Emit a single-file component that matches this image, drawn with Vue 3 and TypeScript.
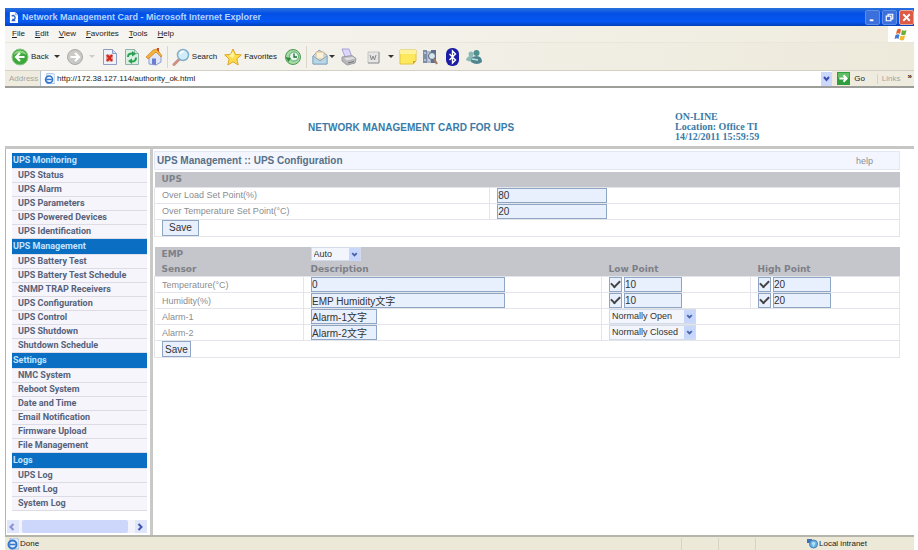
<script setup lang="ts">
import { ref } from 'vue'

interface NavGroup {
  title: string
  items: string[]
}

interface SetPoint {
  id: string
  label: string
  value: string
}

interface SensorRow {
  id: string
  label: string
  description: string
  low: string
  high: string
  lowOn: boolean
  highOn: boolean
}

interface AlarmRow {
  id: string
  label: string
  description: string
  mode: string
}

const menus: string[] = ['File', 'Edit', 'View', 'Favorites', 'Tools', 'Help']

const groups: NavGroup[] = [
  {
    title: 'UPS Monitoring',
    items: ['UPS Status', 'UPS Alarm', 'UPS Parameters', 'UPS Powered Devices', 'UPS Identification'],
  },
  {
    title: 'UPS Management',
    items: [
      'UPS Battery Test',
      'UPS Battery Test Schedule',
      'SNMP TRAP Receivers',
      'UPS Configuration',
      'UPS Control',
      'UPS Shutdown',
      'Shutdown Schedule',
    ],
  },
  {
    title: 'Settings',
    items: ['NMC System', 'Reboot System', 'Date and Time', 'Email Notification', 'Firmware Upload', 'File Management'],
  },
  { title: 'Logs', items: ['UPS Log', 'Event Log', 'System Log'] },
]

const address = ref('http://172.38.127.114/authority_ok.html')
const empMode = ref('Auto')

const setPoints = ref<SetPoint[]>([
  { id: 'load', label: 'Over Load Set Point(%)', value: '80' },
  { id: 'temp', label: 'Over Temperature Set Point(°C)', value: '20' },
])

const sensors = ref<SensorRow[]>([
  { id: 'temperature', label: 'Temperature(°C)', description: '0', low: '10', high: '20', lowOn: true, highOn: true },
  { id: 'humidity', label: 'Humidity(%)', description: 'EMP Humidity文字', low: '10', high: '20', lowOn: true, highOn: true },
])

const alarms = ref<AlarmRow[]>([
  { id: 'alarm1', label: 'Alarm-1', description: 'Alarm-1文字', mode: 'Normally Open' },
  { id: 'alarm2', label: 'Alarm-2', description: 'Alarm-2文字', mode: 'Normally Closed' },
])
</script>

<template>
  <div class="window">
    <header class="titlebar">
      <svg class="title-icon" viewBox="0 0 10 12" aria-hidden="true">
        <path d="M1 0h6l3 3v9H1z" fill="#fff" />
        <path d="M7 0v3h3" fill="none" stroke="#7fa3dc" />
        <path d="M3 4.500a2.200 2.200 0 1 1 3 3.500H3.500M3 9.500h4" fill="none" stroke="#2a62c8" stroke-width="1.400" />
      </svg>
      <h1>Network Management Card - Microsoft Internet Explorer</h1>
      <div class="window-controls">
        <button type="button" aria-label="Minimize">
          <svg viewBox="0 0 14 14"><path d="M4 10h4" stroke="#fff" stroke-width="2" /></svg>
        </button>
        <button type="button" aria-label="Restore">
          <svg viewBox="0 0 14 14"><path d="M5.500 5V3.500h5v5H9M3.500 5.500h5v5h-5z" fill="none" stroke="#fff" stroke-width="1.300" /></svg>
        </button>
        <button type="button" class="close" aria-label="Close">
          <svg viewBox="0 0 14 14"><path d="M3.500 3.500l7 7M10.500 3.500l-7 7" stroke="#fff" stroke-width="2" /></svg>
        </button>
      </div>
    </header>

    <nav class="menubar" aria-label="Menu">
      <button v-for="menu in menus" :key="menu" type="button"><u>{{ menu.charAt(0) }}</u>{{ menu.slice(1) }}</button>
      <span class="throbber">
        <svg viewBox="0 0 16 14" aria-hidden="true">
          <path d="M4 3q2-2 4-.500L7 7Q5 5.500 3 7z" fill="#e8622c" />
          <path d="M9 3q2 1.500 4.500 0L12.500 7.500Q10 9 8 7.500z" fill="#6fae3c" />
          <path d="M2.500 8q2-1.500 4-.200L5.500 12Q4 10.500 1.500 12z" fill="#3f7bd0" />
          <path d="M7.500 8.500q2 1.500 4.500 0L11 13q-2 1-4.500-.500z" fill="#f2b92a" />
        </svg>
      </span>
    </nav>

    <div class="toolbar">
      <button type="button">
        <svg class="icon" viewBox="0 0 18 18" aria-hidden="true">
          <circle cx="9" cy="9" r="8" fill="#3fa83c" stroke="#8fc98a" />
          <path d="M2.500 7A7 7 0 0 1 15.500 7Q9 3 2.500 7z" fill="#8fd483" />
          <path d="M13.500 9H6M9 5L5 9l4 4" fill="none" stroke="#fff" stroke-width="2.200" />
        </svg>
        Back
      </button>
      <button type="button" class="drop" aria-label="Back history"><i class="caret"></i></button>
      <button type="button" aria-label="Forward">
        <svg class="icon" viewBox="0 0 18 18">
          <circle cx="9" cy="9" r="7.500" fill="#c9c9c6" stroke="#aaa" />
          <path d="M4.500 9H12M9 5l4 4-4 4" fill="none" stroke="#fff" stroke-width="2.200" />
        </svg>
      </button>
      <button type="button" class="drop faint" aria-label="Forward history"><i class="caret"></i></button>
      <button type="button" aria-label="Stop">
        <svg class="icon" viewBox="0 0 18 18">
          <path d="M2.500 1.500h9l4 4v11h-13z" fill="#eef2fa" stroke="#8d9ec0" />
          <path d="M11.500 1.500v4h4" fill="#cbd7ee" stroke="#8d9ec0" />
          <path d="M5 6.500h7v7H5z" fill="#e5a09a" />
          <path d="M6 7l5 6M11 7l-5 6" stroke="#cf2a20" stroke-width="2" />
        </svg>
      </button>
      <button type="button" aria-label="Refresh">
        <svg class="icon" viewBox="0 0 18 18">
          <path d="M2.500 1.500h9l4 4v11h-13z" fill="#d9efe2" stroke="#8fb3a6" />
          <path d="M11.500 1.500v4h4" fill="#cbe4d8" stroke="#8fb3a6" />
          <path d="M5 9q0-4 5-3.500M13 9.500q0 4.500-5 4" fill="none" stroke="#27a050" stroke-width="2" />
          <path d="M9 3l4 3-4 2.500zM9 10.500v5.500L5 13z" fill="#27a050" />
        </svg>
      </button>
      <button type="button" aria-label="Home">
        <svg class="icon" viewBox="0 0 18 18">
          <path d="M4 8v8l7 1 5-3V8l-5-5z" fill="#dfe6f8" stroke="#8c9cd4" />
          <path d="M1 9l7-7 4-1 5 7-1 1-5-5-8 7z" fill="#f2b23c" stroke="#d08020" stroke-width=".700" />
          <path d="M12 2V0h2v4z" fill="#c84a30" />
          <path d="M7 10.500h4V17l-4-1z" fill="#6a80cc" />
        </svg>
      </button>
      <i class="rule"></i>
      <button type="button">
        <svg class="icon" viewBox="0 0 18 18" aria-hidden="true">
          <path d="M7.500 11L2 16.500" stroke="#c89284" stroke-width="3" stroke-linecap="round" />
          <circle cx="11" cy="7" r="5.500" fill="#cdeefa" stroke="#85aecb" stroke-width="1.500" />
          <path d="M8 6q1-3 4-2.500" fill="none" stroke="#fff" stroke-width="1.500" />
        </svg>
        Search
      </button>
      <button type="button" class="favorites">
        <svg class="icon" viewBox="0 0 18 18" aria-hidden="true">
          <path d="M9 1l2.400 5.300 5.900.600-4.400 4 1.300 6L9 13.800 3.800 17l1.300-6-4.400-4.100 5.900-.600z" fill="#fbdc4a" stroke="#dda72c" />
          <path d="M9 3.500l1.500 3.800L9 10 5 8z" fill="#fff3a0" />
        </svg>
        Favorites
      </button>
      <button type="button" class="history" aria-label="History">
        <svg class="icon" viewBox="0 0 18 18">
          <circle cx="9" cy="9" r="7.500" fill="#a5dba2" stroke="#4b9a58" />
          <circle cx="10" cy="8.500" r="4.500" fill="#e6f7ea" stroke="#5ba772" />
          <path d="M10 5.500V9h3" fill="none" stroke="#1f6e3a" stroke-width="1.300" />
          <path d="M1.500 9l3 5 2.500-4z" fill="#2d8a3e" />
        </svg>
      </button>
      <i class="rule"></i>
      <button type="button" aria-label="Mail">
        <svg class="icon" viewBox="0 0 18 18">
          <path d="M2 8l6-6 8 5v9H2z" fill="#cde2ef" stroke="#88a8c0" />
          <path d="M5 4h8v7H5z" fill="#fbf1da" stroke="#dbb988" />
          <path d="M2 8l7 5 7-5v8H2z" fill="#b7d7e9" stroke="#88a8c0" />
        </svg>
      </button>
      <button type="button" class="drop tight" aria-label="Mail options"><i class="caret"></i></button>
      <button type="button" aria-label="Print">
        <svg class="icon" viewBox="0 0 18 18">
          <path d="M3 1h7l3 8H6z" fill="#dcd6fa" stroke="#a9a2d4" />
          <path d="M3 9l10-1.500 4 3-1 4.500-8 2-5-4z" fill="#b8b8bc" stroke="#9c9ca4" />
          <path d="M5 10l9-1 2 1.500-8 2z" fill="#e0e0e2" />
          <path d="M9 15l6-1.500" stroke="#777" />
        </svg>
      </button>
      <button type="button" class="edit" aria-label="Edit">
        <svg class="icon" viewBox="0 0 18 18">
          <path d="M4 4h11v11H4z" fill="#e6e6e6" stroke="#c4c4c4" />
          <path d="M4 15h11V4" fill="none" stroke="#999" />
          <path d="M6 7l1.500 5L9 8l1.500 4L12 7" fill="none" stroke="#888" />
        </svg>
      </button>
      <button type="button" class="drop" aria-label="Edit options"><i class="caret"></i></button>
      <button type="button" aria-label="Discuss">
        <svg class="icon" viewBox="0 0 18 18">
          <path d="M1 2h16v11l-3 3H1z" fill="#fde85e" stroke="#e3c63c" />
          <path d="M1 2h16v4H1z" fill="#fff29c" />
          <path d="M17 13h-3v3z" fill="#d99d28" />
        </svg>
      </button>
      <button type="button" aria-label="Research">
        <svg class="icon" viewBox="0 0 18 18">
          <path d="M2 2h4v13H2z" fill="#7c8ea8" />
          <path d="M6 3h4v12H6z" fill="#a8b8c8" />
          <path d="M10 2h5v13h-5z" fill="#60708e" />
          <path d="M3 5h2M7 6h2M3 12h2M7 12h2" stroke="#eef" />
          <circle cx="11" cy="8" r="3.500" fill="#d4e5f0" stroke="#56657c" />
          <path d="M13 11l3 5" stroke="#a07a5c" stroke-width="2" />
        </svg>
      </button>
      <button type="button" aria-label="Bluetooth">
        <svg class="icon" viewBox="0 0 18 18">
          <rect x="3" y="0" width="13" height="18" rx="6" fill="#1b1ea4" />
          <path d="M6.500 6l6 6-3 3V3l3 3-6 6" fill="none" stroke="#fff" stroke-width="1.400" />
        </svg>
      </button>
      <button type="button" aria-label="Messenger">
        <svg class="icon" viewBox="0 0 18 18">
          <circle cx="6" cy="6" r="2.500" fill="#8ab8b4" />
          <path d="M1 12q1-4 5-4t5 4q-5 3-10 0z" fill="#8ab8b4" />
          <circle cx="11.500" cy="5" r="3" fill="#4e908c" />
          <path d="M6 14q0-6 5.500-6t5.500 6q-5 4-11 0z" fill="#4e8490" />
          <path d="M7 11l6 1" stroke="#bfe2dc" stroke-width="1.500" />
        </svg>
      </button>
    </div>

    <form class="addressbar" @submit.prevent>
      <label for="address">Address</label>
      <div class="address-field">
        <svg class="page-icon" viewBox="0 0 12 12" aria-hidden="true">
          <path d="M3 0h7l2 2v9H3z" fill="#eef4fc" stroke="#a9bfdf" />
          <circle cx="5.500" cy="6.500" r="3.800" fill="none" stroke="#3477cf" stroke-width="1.800" />
          <path d="M2.500 6.500h6" stroke="#3477cf" stroke-width="1.500" />
        </svg>
        <input id="address" v-model="address" type="text" />
        <button type="button" class="address-drop" aria-label="Show addresses">
          <svg viewBox="0 0 11 12"><path d="M3 4l2.500 3L8 4" fill="none" stroke="#3b4fae" stroke-width="2" /></svg>
        </button>
      </div>
      <button type="submit" class="go">
        <svg viewBox="0 0 14 14" aria-hidden="true">
          <path d="M0 0h14v14H0z" fill="#2f9e3c" />
          <path d="M1 1h12v5H1z" fill="#62bd64" />
          <path d="M2.500 7H10M7 3.500L10.500 7 7 10.500" fill="none" stroke="#fff" stroke-width="2" />
        </svg>
        Go
      </button>
      <span class="links">Links</span>
      <button type="button" class="more" aria-label="More links">»</button>
    </form>

    <section class="banner">
      <h2>NETWORK MANAGEMENT CARD FOR UPS</h2>
      <p>ON-LINE<br />Location: Office TI<br />14/12/2011 15:59:59</p>
    </section>

    <div class="frames">
      <aside class="sidebar">
        <nav aria-label="Sections">
          <section v-for="group in groups" :key="group.title">
            <h3>{{ group.title }}</h3>
            <a v-for="item in group.items" :key="item" href="#">{{ item }}</a>
          </section>
        </nav>
        <div class="scroller">
          <button type="button" aria-label="Scroll left">
            <svg viewBox="0 0 10 12"><path d="M6.500 3L3.500 6l3 3" fill="none" stroke="#8a8fd0" stroke-width="2" /></svg>
          </button>
          <i class="thumb"></i>
          <button type="button" aria-label="Scroll right">
            <svg viewBox="0 0 10 12"><path d="M3.500 3l3 3-3 3" fill="none" stroke="#4054b4" stroke-width="2" /></svg>
          </button>
        </div>
      </aside>

      <main class="content">
        <div class="heading">
          <h2>UPS Management :: UPS Configuration</h2>
          <a href="#">help</a>
        </div>

        <table class="ups">
          <colgroup><col class="ups-name" /><col /></colgroup>
          <thead>
            <tr><th colspan="2" scope="colgroup">UPS</th></tr>
          </thead>
          <tbody>
            <tr v-for="point in setPoints" :key="point.id">
              <td><label :for="point.id">{{ point.label }}</label></td>
              <td><input :id="point.id" v-model="point.value" class="medium" type="text" /></td>
            </tr>
            <tr><td colspan="2"><button type="button" class="save wide">Save</button></td></tr>
          </tbody>
        </table>

        <table class="emp">
          <colgroup><col class="narrow" /><col class="broad" /><col class="narrow" /><col class="narrow" /></colgroup>
          <thead>
            <tr>
              <th scope="col"><label for="emp-mode">EMP</label></th>
              <th colspan="3">
                <span class="select short">
                  <select id="emp-mode" v-model="empMode">
                    <option>Auto</option>
                    <option>Manual</option>
                  </select>
                  <svg viewBox="0 0 12 14" aria-hidden="true"><path d="M0 0h12v14H0z" fill="#c7d6fb" /><path d="M3.500 5.500L6 8l2.500-2.500" fill="none" stroke="#4a64a8" stroke-width="2" /></svg>
                </span>
              </th>
            </tr>
            <tr>
              <th scope="col">Sensor</th>
              <th scope="col">Description</th>
              <th scope="col">Low Point</th>
              <th scope="col">High Point</th>
            </tr>
          </thead>
          <tbody>
            <tr v-for="row in sensors" :key="row.id">
              <td><label :for="row.id">{{ row.label }}</label></td>
              <td><input :id="row.id" v-model="row.description" class="long" type="text" /></td>
              <td>
                <div class="limit">
                  <input v-model="row.lowOn" type="checkbox" :aria-label="row.label + ' low point enabled'" />
                  <input v-model="row.low" type="text" :aria-label="row.label + ' low point'" />
                </div>
              </td>
              <td>
                <div class="limit">
                  <input v-model="row.highOn" type="checkbox" :aria-label="row.label + ' high point enabled'" />
                  <input v-model="row.high" type="text" :aria-label="row.label + ' high point'" />
                </div>
              </td>
            </tr>
            <tr v-for="row in alarms" :key="row.id">
              <td><label :for="row.id">{{ row.label }}</label></td>
              <td><input :id="row.id" v-model="row.description" class="small" type="text" /></td>
              <td colspan="2">
                <span class="select">
                  <select v-model="row.mode" :aria-label="row.label + ' contact'">
                    <option>Normally Open</option>
                    <option>Normally Closed</option>
                  </select>
                  <svg viewBox="0 0 12 14" aria-hidden="true"><path d="M0 0h12v14H0z" fill="#c7d6fb" /><path d="M3.500 5.500L6 8l2.500-2.500" fill="none" stroke="#4a64a8" stroke-width="2" /></svg>
                </span>
              </td>
            </tr>
            <tr><td colspan="4"><button type="button" class="save">Save</button></td></tr>
          </tbody>
        </table>
      </main>
    </div>

    <footer class="statusbar">
      <span class="status">
        <svg viewBox="0 0 12 12" aria-hidden="true">
          <path d="M3 0h7l2 2v9H3z" fill="#dfeafa" stroke="#9fb8dc" />
          <circle cx="5.500" cy="6.500" r="4" fill="none" stroke="#3477cf" stroke-width="2" />
          <path d="M2.500 6.500h6" stroke="#3477cf" stroke-width="1.500" />
        </svg>
        Done
      </span>
      <i v-for="pane in 3" :key="pane" class="pane"></i>
      <span class="zone">
        <svg viewBox="0 0 12 12" aria-hidden="true">
          <path d="M1 1h5v4H1z" fill="#3c70b8" />
          <circle cx="7.500" cy="6" r="4" fill="#69b4e6" stroke="#4282b6" />
          <path d="M5.500 5q2-2 4 0l-2 4z" fill="#b4dff4" />
        </svg>
        Local intranet
      </span>
    </footer>
  </div>
</template>

<style>
body {
  background: #fff;
}
</style>

<style scoped>
* {
  box-sizing: border-box;
}

.window {
  display: flex;
  flex-direction: column;
  min-height: 100vh;
  padding: 8px 4px 0 5px;
  font: 8px/10px "Liberation Sans", "Noto Sans CJK TC", sans-serif;
  color: #222;
}

button,
input,
select {
  margin: 0;
  padding: 0;
  border: 0;
  border-radius: 0;
  background: none;
  font: inherit;
  color: inherit;
}

svg {
  display: block;
}

h1,
h2,
h3,
p {
  margin: 0;
}

a {
  color: inherit;
  text-decoration: none;
}

.titlebar {
  display: flex;
  align-items: center;
  gap: 4px;
  height: 18px;
  padding-left: 4px;
  background: linear-gradient(#2a72dc, #0450e6 30%, #0558f4 75%, #0340b8);
}

.title-icon {
  width: 9px;
  height: 11px;
}

.titlebar h1 {
  flex: 1;
  font-size: 9px;
  color: #b4d4ff;
}

.window-controls {
  display: flex;
  gap: 2px;
}

.window-controls button {
  width: 15px;
  height: 15px;
  border: 1px solid #5f8ce4;
  border-radius: 2px;
  background: #3b6fdc;
}

.window-controls .close {
  background: #de5a44;
  border-color: #e8a79c;
}

.menubar {
  display: flex;
  align-items: center;
  gap: 10px;
  height: 16px;
  padding-left: 7px;
  background: linear-gradient(90deg, #f6f5f2, #efecde);
}

.menubar u {
  text-underline-offset: 1px;
}

.throbber {
  display: grid;
  place-items: center;
  width: 26px;
  height: 16px;
  margin-left: auto;
  background: #fff;
}

.throbber svg {
  width: 16px;
  height: 14px;
}

.toolbar {
  display: flex;
  align-items: center;
  gap: 4px;
  height: 29px;
  padding-left: 6px;
  border-top: 1px solid #e9e6da;
  border-bottom: 1px solid #d4d1c4;
  background: linear-gradient(90deg, #f6f5f2, #edeadb);
}

.toolbar button {
  display: flex;
  align-items: center;
  gap: 2px;
}

.icon {
  width: 18px;
  height: 18px;
}

.toolbar .drop {
  justify-content: center;
  width: 9px;
}

.toolbar .tight {
  width: 6px;
  margin-left: -4px;
}

.toolbar .edit,
.toolbar .favorites,
.toolbar .history {
  margin-left: 3px;
}

.caret {
  border: 3px solid transparent;
  border-top-color: #333;
  border-bottom: 0;
}

.faint .caret {
  border-top-color: #ccc;
}

.rule {
  width: 1px;
  height: 22px;
  background: #d9d6ca;
}

.addressbar {
  display: flex;
  align-items: center;
  height: 17px;
  padding-left: 4px;
  border-bottom: 2px solid #9d9d9a;
  background: #efecdf;
}

.addressbar label {
  width: 31px;
  color: #a5a5a2;
}

.address-field {
  display: flex;
  flex: 1;
  align-items: center;
  gap: 2px;
  height: 15px;
  padding-left: 3px;
  border-left: 1px solid #b4c4d8;
  background: #fff;
}

.page-icon {
  width: 11px;
  height: 12px;
}

.address-field input {
  flex: 1;
  min-width: 0;
  outline: 0;
}

.address-drop {
  width: 11px;
  height: 14px;
  background: #cbd8fb;
}

.go {
  display: flex;
  align-items: center;
  gap: 4px;
  margin-left: 5px;
}

.go svg {
  width: 13px;
  height: 13px;
}

.links {
  margin-left: 12px;
  padding-left: 4px;
  border-left: 1px solid #d6d3c6;
  color: #a5a5a2;
}

.more {
  margin: 0 2px 4px 7px;
  font-weight: bold;
}

.banner {
  display: grid;
  grid-template-columns: 670fr 239fr;
  align-items: center;
  height: 58px;
  color: #3a7ba8;
}

.banner h2 {
  padding: 22px 0 0 303px;
  font-size: 10px;
  line-height: 10px;
}

.banner p {
  padding-top: 20px;
  font: bold 10px/10px "Liberation Serif", serif;
}

.frames {
  display: flex;
  flex: 1;
  border-top: 3px solid #c6c6c4;
}

.sidebar {
  display: flex;
  flex-direction: column;
  justify-content: space-between;
  width: 145px;
  border-left: 1px solid #b4b4b2;
}

.sidebar nav {
  padding: 4px 3px 0 6px;
  font: bold 9px/13px Roboto, "Liberation Sans", sans-serif;
}

.sidebar h3 {
  padding-left: 1px;
  border-bottom: 1px solid #e1dfe8;
  background: #0a6fc2;
  font-size: 9px;
  line-height: 15px;
  color: #c4e4ff;
}

.sidebar a {
  display: block;
  padding-left: 6px;
  border-bottom: 1px solid #dddbe4;
  background: #f6f5fb;
  color: #56627a;
}

.scroller {
  display: flex;
  justify-content: space-between;
  gap: 3px;
  height: 13px;
  margin: 0 3px 2px 1px;
  background: #f3f4fb;
}

.scroller button {
  width: 12px;
  background: #dfe5fb;
}

.scroller svg {
  width: 10px;
  height: 12px;
}

.thumb {
  flex: 1;
  margin-right: 4px;
  border-radius: 2px;
  background: #ccd7fb;
}

.content {
  flex: 1;
  min-width: 0;
  padding: 2px 14px 0 1px;
  border-left: 3px solid #c9c9c8;
}

.heading {
  display: flex;
  align-items: center;
  justify-content: space-between;
  height: 19px;
  margin-bottom: 2px;
  padding: 0 26px 0 2px;
  border: 1px solid #e4e8f2;
  background: #f3f6fe;
}

.heading h2 {
  font-size: 10px;
  line-height: 12px;
  color: #587086;
}

.heading a {
  font-size: 9px;
  color: #8a8f98;
}

table {
  width: 100%;
  table-layout: fixed;
  border-collapse: collapse;
  font-size: 9px;
}

.emp {
  margin-top: 10px;
}

.ups-name {
  width: 45%;
}

.narrow {
  width: 20%;
}

.broad {
  width: 40%;
}

th,
td {
  height: 16px;
  padding: 0 0 0 7px;
  line-height: 10px;
  text-align: left;
  vertical-align: middle;
}

th {
  height: 15px;
  background: #c5c6cb;
  font: bold 9px/10px "DejaVu Sans", sans-serif;
  color: #7d8088;
}

td {
  border: 1px solid #e3e5ea;
  color: #8b8d92;
}

td input,
.select,
.save {
  display: block;
  height: 15px;
  border: 1px solid #8fa5c4;
  background: #e8effd;
  font: 10px/13px "Liberation Sans", "Noto Sans CJK TC", sans-serif;
  color: #333;
}

.medium {
  width: 110px;
}

.long {
  width: 194px;
}

.small {
  width: 66px;
}

.limit {
  display: flex;
  gap: 2px;
}

.limit input[type="text"] {
  width: 58px;
}

.limit input[type="checkbox"] {
  appearance: none;
  display: grid;
  place-items: center;
  width: 13px;
}

.limit input[type="checkbox"]:checked::before {
  content: "";
  width: 7px;
  height: 4px;
  margin-bottom: 3px;
  border: solid #444;
  border-width: 0 0 2px 2px;
  transform: rotate(-45deg);
}

.select {
  display: grid;
  width: 87px;
  border-color: #d3dae8;
  background: #f2f5fb;
  font-size: 9px;
}

.short {
  width: 50px;
  height: 14px;
}

.select select {
  grid-area: 1 / 1;
  width: 100%;
  height: 100%;
  padding-left: 2px;
  appearance: none;
}

.select svg {
  grid-area: 1 / 1;
  justify-self: end;
  width: 11px;
  height: 100%;
  pointer-events: none;
}

.save {
  width: 29px;
  height: 16px;
  text-align: center;
}

.wide {
  width: 37px;
}

.statusbar {
  display: flex;
  align-items: center;
  height: 15px;
  border-top: 2px solid #b5b5ac;
  background: #ece9d8;
}

.status,
.zone {
  display: flex;
  align-items: center;
  gap: 1px;
}

.status {
  flex: 1;
  padding-left: 2px;
}

.status svg,
.zone svg {
  width: 12px;
  height: 12px;
}

.pane {
  width: 37px;
  height: 12px;
  border-left: 1px solid #d6d3c4;
}

.zone {
  width: 122px;
  padding-left: 14px;
}
</style>
